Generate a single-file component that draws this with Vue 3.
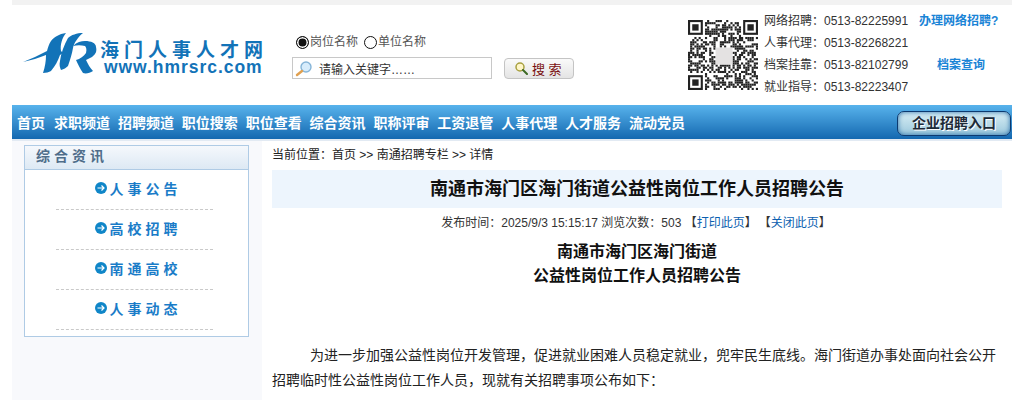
<script setup>
const navItems = [
  "首页",
  "求职频道",
  "招聘频道",
  "职位搜索",
  "职位查看",
  "综合资讯",
  "职称评审",
  "工资退管",
  "人事代理",
  "人才服务",
  "流动党员",
];

const sideItems = ["人事公告", "高校招聘", "南通高校", "人事动态"];

const contacts = [
  { label: "网络招聘", phone: "0513-82225991", link: "办理网络招聘?" },
  { label: "人事代理", phone: "0513-82268221", link: "" },
  { label: "档案挂靠", phone: "0513-82102799", link: "档案查询" },
  { label: "就业指导", phone: "0513-82223407", link: "" },
];

// qr code modules, pseudo random with the three corner markers on top
const size = 33;
const qrCells = [];
let seed = 11;
for (let y = 0; y < size; y++) {
  for (let x = 0; x < size; x++) {
    seed = (seed * 1103515245 + 12345) % 2147483648;
    const inCorner =
      (x < 8 && y < 8) || (x > size - 9 && y < 8) || (x < 8 && y > size - 9);
    const inCenter = x > 12 && x < 21 && y > 12 && y < 21;
    if (!inCorner && !inCenter && (seed >> 16) % 100 < 54) {
      qrCells.push({ x, y });
    }
  }
}
const qrCorners = [
  [0, 0],
  [size - 7, 0],
  [0, size - 7],
];
</script>

<template>
  <div class="page">
    <div class="top-strip"></div>

    <header class="header">
      <div class="logo">
        <svg class="logo-mark" width="76" height="46" viewBox="0 0 76 46">
          <path
            d="M44 1C37 2 32 5 29 9C27 12 26 15 25 19C17 23 9 27 1 30C9 28 17 26 24 23C24 29 23 35 21 41C24 41 27 40 29 39C33 34 36 29 38 23L41 21L39 19C38 13 40 6 44 1Z"
            fill="#1273b8"
          />
          <path
            d="M61 1C55 1 49 3 46 6C42 13 39 21 38 29C37 33 38 36 39 38C42 37 44 36 46 34C48 28 50 22 51 16C52 11 56 5 61 1Z"
            fill="#1273b8"
          />
          <path
            d="M51 14C55 10 59 9 63 9C69 9 74 11 74 15C75 19 74 22 70 25C68 26 66 27 64 28C66 32 68 36 71 39C68 41 64 42 61 41C58 37 56 32 54 28C58 27 62 24 64 21C65 17 64 15 63 14C59 13 55 13 51 14Z"
            fill="#1273b8"
          />
        </svg>
        <div class="logo-text">
          <div class="logo-name">海门人事人才网</div>
          <div class="logo-url">www.hmrsrc.com</div>
        </div>
      </div>

      <div class="search">
        <div class="radios">
          <label class="radio"><span class="dot checked"></span>岗位名称</label>
          <label class="radio"><span class="dot"></span>单位名称</label>
        </div>
        <div class="search-row">
          <div class="search-input">
            <svg width="18" height="17" viewBox="0 0 18 17">
              <circle cx="11" cy="7" r="5" fill="#d7ecfb" stroke="#86b5d8" stroke-width="1.4" />
              <path d="M7 11L2 15" stroke="#e0a050" stroke-width="2.4" stroke-linecap="round" />
            </svg>
            <span>请输入关键字……</span>
          </div>
          <button class="search-btn">
            <svg width="14" height="14" viewBox="0 0 14 14">
              <circle cx="6" cy="6" r="4" fill="#fff6c8" stroke="#a8a040" stroke-width="1.5" />
              <path d="M9 9L13 13" stroke="#3d6a24" stroke-width="2" stroke-linecap="round" />
            </svg>
            <span>搜 索</span>
          </button>
        </div>
      </div>

      <svg class="qr" width="70" height="70" viewBox="0 0 33 33">
        <rect
          v-for="cell in qrCells"
          :key="cell.x + '-' + cell.y"
          :x="cell.x"
          :y="cell.y"
          width="1"
          height="1"
          fill="#222"
        />
        <g v-for="c in qrCorners" :key="c[0] + '_' + c[1]">
          <rect :x="c[0] + 0.5" :y="c[1] + 0.5" width="6" height="6" fill="none" stroke="#222" />
          <rect :x="c[0] + 2" :y="c[1] + 2" width="3" height="3" fill="#222" />
        </g>
        <rect x="13" y="13" width="8" height="8" fill="#e4e2e2" />
      </svg>

      <ul class="contacts">
        <li v-for="row in contacts" :key="row.label" class="contact">
          <span class="contact-label">{{ row.label }}：</span>
          <span class="contact-phone">{{ row.phone }}</span>
          <a class="contact-link">{{ row.link }}</a>
        </li>
      </ul>
    </header>

    <nav class="nav">
      <a v-for="item in navItems" :key="item" class="nav-item">{{ item }}</a>
      <a class="nav-btn">企业招聘入口</a>
    </nav>

    <div class="main">
      <aside class="side">
        <div class="side-box">
          <h3 class="side-title">综合资讯</h3>
          <ul class="side-list">
            <li v-for="item in sideItems" :key="item" class="side-item">
              <svg width="12" height="12" viewBox="0 0 12 12">
                <circle cx="6" cy="6" r="6" fill="#0f86c8" />
                <path d="M2.5 6H9M6.5 3.5L9 6L6.5 8.5" fill="none" stroke="#fff" stroke-width="1.2" />
              </svg>
              <span>{{ item }}</span>
            </li>
          </ul>
        </div>
      </aside>

      <section class="content">
        <div class="crumbs">当前位置：首页 &gt;&gt; 南通招聘专栏 &gt;&gt; 详情</div>
        <h1 class="title">南通市海门区海门街道公益性岗位工作人员招聘公告</h1>
        <div class="meta">
          发布时间：2025/9/3 15:15:17 浏览次数：503 <span>【<a>打印此页</a>】</span>
          <span class="meta-close">【<a>关闭此页</a>】</span>
        </div>
        <h2 class="heading">南通市海门区海门街道<br />公益性岗位工作人员招聘公告</h2>
        <p class="para">
          为进一步加强公益性岗位开发管理，促进就业困难人员稳定就业，兜牢民生底线。海门街道办事处面向社会公开招聘临时性公益性岗位工作人员，现就有关招聘事项公布如下：
        </p>
      </section>
    </div>
  </div>
</template>

<style>
html,
body {
  margin: 0;
  background: #fff;
  overflow: hidden;
}
</style>

<style scoped>
.page {
  width: 1000px;
  height: 400px;
  margin-left: 12px;
  overflow: hidden;
  font-family: "Liberation Sans", "Noto Sans CJK SC", sans-serif;
  font-size: 12px;
  color: #222;
  text-spacing-trim: space-all;
}
.top-strip {
  height: 5px;
  background: #f2f2f2;
}

.header {
  display: flex;
  height: 100px;
}
.logo {
  display: flex;
  width: 280px;
  padding: 27px 0 0 10px;
  box-sizing: border-box;
}
.logo-mark {
  flex: none;
}
.logo-text {
  margin-left: 2px;
  padding-top: 10px;
  white-space: nowrap;
}
.logo-name {
  font-size: 19px;
  line-height: 18px;
  letter-spacing: 5px;
  color: #1273b8;
  font-weight: bold;
}
.logo-url {
  font-size: 17.5px;
  line-height: 14px;
  margin-left: 4px;
  font-weight: bold;
  letter-spacing: 0.95px;
  color: #1273b8;
}

.search {
  width: 396px;
  padding-top: 28px;
  box-sizing: border-box;
}
.radios {
  display: flex;
  gap: 6px;
  margin-left: 4px;
  color: #555;
  line-height: 18px;
}
.radio {
  display: flex;
  align-items: center;
  gap: 1px;
}
.dot {
  width: 13px;
  height: 13px;
  border: 1px solid #111;
  border-radius: 50%;
  box-sizing: border-box;
}
.dot.checked {
  background: #111;
  box-shadow: inset 0 0 0 1.5px #fff;
}
.search-row {
  display: flex;
  align-items: center;
  gap: 12px;
  margin-top: 6px;
}
.search-input {
  display: flex;
  align-items: center;
  gap: 6px;
  width: 200px;
  height: 22px;
  padding-left: 2px;
  box-sizing: border-box;
  border: 1px solid #c8c8c8;
  color: #333;
}
.search-btn {
  display: flex;
  align-items: center;
  gap: 4px;
  width: 70px;
  height: 21px;
  padding: 0 0 0 9px;
  box-sizing: border-box;
  border: 1px solid #c4c4c4;
  border-radius: 4px;
  background: linear-gradient(#fafafa, #e4e4e4);
  font: inherit;
  font-size: 13px;
  color: #7a1010;
}

.qr {
  flex: none;
  margin-top: 15px;
  filter: blur(0.35px);
}
.contacts {
  list-style: none;
  margin: 5px 0 0 6px;
  padding: 0;
}
.contact {
  display: flex;
  height: 22px;
  line-height: 22px;
  white-space: nowrap;
}
.contact-label {
  width: 60px;
  color: #333;
}
.contact-phone {
  width: 95px;
  color: #333;
}
.contact-link {
  width: 78px;
  text-align: center;
  font-weight: bold;
  color: #1a84d6;
}
.contact:nth-child(3) .contact-link {
  padding-left: 3px;
}

.nav {
  display: flex;
  align-items: center;
  height: 34px;
  padding-left: 5px;
  background: linear-gradient(#58b3ec, #1468b0);
  border-bottom: 2px solid #e2eaf3;
}
.nav-item {
  margin: 0 7.9px 1px 0;
  font-size: 14px;
  font-weight: bold;
  color: #fff;
  white-space: nowrap;
}
.nav-item:first-child {
  margin-right: 9px;
}
.nav-btn {
  margin: 2px 1px 0 auto;
  width: 114px;
  height: 25px;
  box-sizing: border-box;
  border: 1px solid #0c3a70;
  border-radius: 7px;
  background: linear-gradient(#d8eef5, #9cc8dc);
  box-shadow: inset 0 0 5px #2a70aa;
  font-size: 14px;
  font-weight: bold;
  line-height: 23px;
  text-align: center;
  color: #1d2a38;
  text-shadow: 1px 1px 0 #fff;
}

.main {
  display: flex;
  gap: 10px;
}
.side {
  width: 250px;
  height: 259px;
  padding: 4px 12px 0;
  box-sizing: border-box;
  background: #f8f9fc;
}
.side-box {
  width: 225px;
  height: 192px;
  box-sizing: border-box;
  border: 1px solid #afcbe5;
  background: #fff;
}
.side-title {
  height: 24px;
  margin: 0;
  padding-left: 11px;
  box-sizing: border-box;
  border-bottom: 1px solid #afcbe5;
  background: linear-gradient(#f5f8fc, #dde9f4);
  font-size: 14px;
  line-height: 20px;
  letter-spacing: 4px;
  color: #4f6d8a;
}
.side-list {
  list-style: none;
  margin: 0 0 0 31px;
  padding: 0;
  width: 157px;
}
.side-item {
  display: flex;
  align-items: center;
  gap: 2.5px;
  height: 35px;
  padding: 0 0 4px 39px;
  border-bottom: 1px dashed #c9c9c9;
  font-size: 14px;
  font-weight: bold;
  letter-spacing: 4px;
  color: #1a7cc8;
}

.content {
  width: 730px;
}
.crumbs {
  height: 29px;
  line-height: 28px;
  color: #222;
}
.title {
  height: 38px;
  margin: 0;
  background: #edf5fd;
  font-size: 18px;
  line-height: 38px;
  text-align: center;
  color: #111;
}
.meta {
  margin-top: 5px;
  padding-right: 2px;
  line-height: 20px;
  text-align: center;
  color: #333;
}
.meta a {
  color: #0b5fb0;
}
.meta-close {
  margin-left: 2px;
}
.heading {
  margin: 7px 0 0;
  font-size: 16px;
  font-weight: bold;
  line-height: 24px;
  text-align: center;
  color: #111;
}
.para {
  margin: 55px 0 0;
  font-size: 14px;
  line-height: 25px;
  text-indent: 38px;
  color: #222;
}
</style>
